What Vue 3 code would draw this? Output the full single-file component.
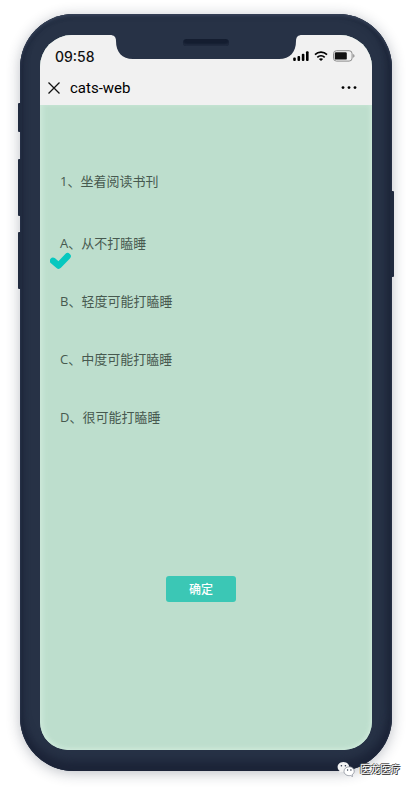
<template>
  <div class="page">
    <div class="phone">
      <span
        v-for="key in sideKeys"
        :key="key"
        class="side-key"
        :class="key"
      ></span>
      <div class="notch">
        <svg width="192" height="25" viewBox="0 0 192 25">
          <path
            d="M0 0H192C188 0 186 2 186 6C186 17 180 24 169 24H23C12 24 6 17 6 6C6 2 4 0 0 0Z"
            fill="#273246"
          />
        </svg>
        <span class="speaker"></span>
      </div>

      <div class="screen">
        <header class="header">
          <div class="status-bar">
            <span class="time">09:58</span>
            <div class="status-icons">
              <svg width="16" height="10" viewBox="0 0 16 10">
                <rect x="0.2" y="6.6" width="2.6" height="3.4" rx="1" />
                <rect x="4.5" y="5" width="2.6" height="5" rx="1" />
                <rect x="8.8" y="2.8" width="2.6" height="7.2" rx="1" />
                <rect x="13" y="0.2" width="2.6" height="9.8" rx="1" />
              </svg>
              <svg width="14" height="10" viewBox="0 0 14 10">
                <path
                  d="M1 3.6C4.4 0.4 9.6 0.4 13 3.6M3.3 6.3C5.4 4.3 8.6 4.3 10.7 6.3"
                  fill="none"
                  stroke="#000"
                  stroke-width="1.7"
                />
                <path d="M4.9 8.1C6.1 7 7.9 7 9.1 8.1L7 10Z" />
              </svg>
              <svg width="22" height="12" viewBox="0 0 22 12">
                <rect
                  x="0.5"
                  y="0.7"
                  width="18.6"
                  height="10.4"
                  rx="3"
                  fill="none"
                  stroke="#8b8b8b"
                />
                <rect x="1.8" y="2.2" width="12" height="7.4" rx="1.2" fill="#111" />
                <path d="M20.2 4C22 4.6 22 7.2 20.2 7.8Z" fill="#8b8b8b" />
              </svg>
            </div>
          </div>
          <nav class="nav-bar">
            <button type="button" class="icon-button" aria-label="关闭">
              <svg width="12" height="12" viewBox="0 0 12 12">
                <path
                  d="M0.5 0.5L11.5 11.5M11.5 0.5L0.5 11.5"
                  stroke="#111"
                  stroke-width="1.3"
                />
              </svg>
            </button>
            <h1 class="nav-title">cats-web</h1>
            <button type="button" class="icon-button" aria-label="更多">
              <svg width="16" height="4" viewBox="0 0 16 4">
                <circle cx="2" cy="1.6" r="1.4" />
                <circle cx="8" cy="1.6" r="1.4" />
                <circle cx="14" cy="1.6" r="1.4" />
              </svg>
            </button>
          </nav>
        </header>

        <form class="question" @submit.prevent>
          <fieldset class="options">
            <legend class="question-title">1、坐着阅读书刊</legend>
            <label v-for="item in options" :key="item.value" class="option">
              <input
                v-model="answer"
                type="radio"
                name="answer"
                class="option-input"
                :value="item.value"
              />
              <span>{{ item.value }}、{{ item.text }}</span>
              <svg
                v-if="answer === item.value"
                class="check"
                width="22"
                height="18"
                viewBox="0 0 22 18"
              >
                <path
                  d="M3 8.8L8.6 13.6L17.6 4.2"
                  fill="none"
                  stroke="#06c8bf"
                  stroke-width="6.4"
                  stroke-linecap="round"
                  stroke-linejoin="round"
                />
              </svg>
            </label>
          </fieldset>
          <button type="submit" class="confirm">确定</button>
        </form>
      </div>
    </div>

    <div class="watermark">
      <svg width="18" height="16" viewBox="0 0 18 16">
        <path
          d="M6.4 1C3 1 0.6 3.2 0.6 6C0.6 7.6 1.4 9 2.7 9.9L2.2 12L4.4 10.8C7.8 11.7 12.2 9.6 12.2 6C12.2 3.2 9.8 1 6.4 1Z"
          fill="#f3f3f3"
        />
        <path
          d="M12.2 5.8C9.2 5.8 7 7.8 7 10.3C7 13.4 10.4 15.2 13.5 14.5L15.5 15.5L15.1 13.7C16.4 12.9 17.2 11.7 17.2 10.3C17.2 7.8 15.2 5.8 12.2 5.8Z"
          fill="#fff"
          stroke="#6b7280"
          stroke-width="0.6"
        />
        <g fill="#273246">
          <circle cx="4.4" cy="4.7" r="0.8" />
          <circle cx="8.4" cy="4.7" r="0.8" />
          <circle cx="10.6" cy="9" r="0.7" />
          <circle cx="13.9" cy="9" r="0.7" />
        </g>
      </svg>
      <span>医龙医疗</span>
    </div>
  </div>
</template>

<script setup>
import { ref } from "vue";

const sideKeys = ["mute", "volume-up", "volume-down", "power"];

const options = [
  { value: "A", text: "从不打瞌睡" },
  { value: "B", text: "轻度可能打瞌睡" },
  { value: "C", text: "中度可能打瞌睡" },
  { value: "D", text: "很可能打瞌睡" },
];

const answer = ref("A");
</script>

<style>
body {
  margin: 0;
  background: #fff;
}
</style>

<style scoped>
.page {
  position: relative;
  display: flex;
  box-sizing: border-box;
  min-height: 100vh;
  padding: 14px 20px 17px;
  font-family: "Open Sans", "Noto Sans CJK SC", sans-serif;
}

.phone {
  position: relative;
  display: flex;
  flex: 1;
  box-sizing: border-box;
  padding: 21px 20px;
  border-radius: 54px;
  background: #273246;
  box-shadow: 0 2px 14px rgba(30, 40, 60, 0.3),
    inset 0 2px 3px #364258, inset 0 -10px 10px #1c2438,
    inset -5px 0 6px #1e273a, inset 3px 0 5px #202a3e;
}

/* 侧边按键 */
.side-key {
  position: absolute;
  left: -2px;
  width: 3px;
  height: 57px;
  border-radius: 1px;
  background: #202a3e;
}
.mute {
  top: 89px;
  height: 29px;
}
.volume-up {
  top: 145px;
}
.volume-down {
  top: 218px;
}
.power {
  top: 177px;
  right: -2px;
  left: auto;
  height: 86px;
}

.notch {
  position: absolute;
  z-index: 1;
  top: 21px;
  left: 50%;
  height: 25px;
  transform: translateX(-50%);
}
.speaker {
  position: absolute;
  top: 4px;
  left: 50%;
  width: 46px;
  height: 7px;
  border-radius: 4px;
  background: #141d30;
  box-shadow: inset 0 -2px 2px #202b3f;
  transform: translateX(-50%);
}

.screen {
  display: flex;
  flex: 1;
  flex-direction: column;
  overflow: hidden;
  border-radius: 32px 32px 28px 28px;
  background: #bddecd;
}

.header {
  padding-bottom: 6px;
  background: #f1f1f1;
}
.status-bar {
  display: flex;
  align-items: center;
  justify-content: space-between;
  height: 42px;
  padding: 0 17px 0 15px;
}
.time {
  font: 500 14px Inter, sans-serif;
  color: #111;
}
.status-icons {
  display: flex;
  gap: 5px;
  align-items: center;
}
.nav-bar {
  display: flex;
  align-items: center;
  height: 22px;
  padding: 0 15px 0 8px;
}
.nav-title {
  flex: 1;
  margin: 0 0 0 10px;
  font: 400 15px Roboto, sans-serif;
  color: #000;
}
.icon-button {
  display: flex;
  padding: 0;
  border: 0;
  background: none;
}

.question {
  display: flex;
  flex: 1;
  flex-direction: column;
  align-items: center;
  padding: 66px 10px 20px;
  border-radius: 0 0 28px 28px;
  box-shadow: inset 5px 0 5px -2px #cce8d9, inset -3px 0 4px -1px #cce8d9,
    inset 0 -4px 4px -2px #cce8d9;
}
.options {
  align-self: stretch;
  margin: 0;
  padding: 0;
  border: 0;
}
.question-title {
  margin-bottom: 22px;
  padding: 0 10px;
  font-size: 13px;
  line-height: 20px;
  color: #47594f;
}
.option {
  position: relative;
  display: flex;
  align-items: center;
  height: 58px;
  padding: 0 10px;
  font-size: 13px;
  color: #47594f;
  cursor: pointer;
}
.option-input {
  position: absolute;
  margin: 0;
  opacity: 0;
}
.check {
  position: absolute;
  top: 39px;
  left: 0;
}
.confirm {
  width: 70px;
  height: 26px;
  margin: 131px 10px 0 0;
  padding: 0 0 2px;
  border: 0;
  border-radius: 3px;
  background: #3bc7b5;
  font: 500 12px "Noto Sans CJK SC", sans-serif;
  color: #fff;
  cursor: pointer;
}

.watermark {
  position: absolute;
  right: 12px;
  bottom: 9px;
  display: flex;
  gap: 5px;
  align-items: center;
  font-size: 10px;
  line-height: 20px;
  color: #fff;
  text-shadow: 1px 1px 0 #222, -1px 0 0 #555, 0 -1px 0 #555;
}
</style>
